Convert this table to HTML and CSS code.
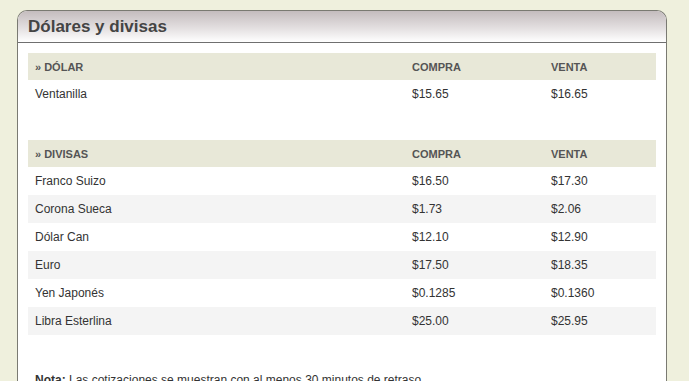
FILE: index.html
```html
<!DOCTYPE html>
<html lang="es">
<head>
<meta charset="utf-8">
<title>Dólares y divisas</title>
<link rel="stylesheet" href="styles.css">
</head>
<body>
<div class="panel">
  <div class="panel-head"><h2 class="title">Dólares y divisas</h2></div>
  <div class="panel-body">
    <table class="rates">
      <thead>
        <tr><th class="c-name">» DÓLAR</th><th class="c-buy">COMPRA</th><th class="c-sell">VENTA</th></tr>
      </thead>
      <tbody>
        <tr><td>Ventanilla</td><td>$15.65</td><td>$16.65</td></tr>
      </tbody>
    </table>
    <table class="rates gap">
      <thead>
        <tr><th class="c-name">» DIVISAS</th><th class="c-buy">COMPRA</th><th class="c-sell">VENTA</th></tr>
      </thead>
      <tbody>
        <tr><td>Franco Suizo</td><td>$16.50</td><td>$17.30</td></tr>
        <tr class="alt"><td>Corona Sueca</td><td>$1.73</td><td>$2.06</td></tr>
        <tr><td>Dólar Can</td><td>$12.10</td><td>$12.90</td></tr>
        <tr class="alt"><td>Euro</td><td>$17.50</td><td>$18.35</td></tr>
        <tr><td>Yen Japonés</td><td>$0.1285</td><td>$0.1360</td></tr>
        <tr class="alt"><td>Libra Esterlina</td><td>$25.00</td><td>$25.95</td></tr>
      </tbody>
    </table>
    <p class="note"><b>Nota:</b> Las cotizaciones se muestran con al menos 30 minutos de retraso.</p>
  </div>
</div>
</body>
</html>
```
FILE: styles.css
```css
html, body {
  margin: 0;
  padding: 0;
  background: #eff0dd;
  font-family: "Liberation Sans", Arial, sans-serif;
  color: #333;
}
body {
  padding-top: 10px;
}
.panel {
  margin-left: 17px;
  width: 648px;
  background: #fff;
  border: 1px solid #7a7a72;
  border-bottom: none;
  border-radius: 10px 10px 0 0;
  min-height: 400px;
}
.panel-head {
  height: 31px;
  border-bottom: 1px solid #6f6f6f;
  border-radius: 9px 9px 0 0;
  background: linear-gradient(to bottom, #c4bcbe 0%, #e3dfe0 55%, #ffffff 100%);
  display: flex;
  align-items: center;
  padding-left: 10px;
}
.title {
  margin: 0;
  font-size: 17px;
  font-weight: bold;
  color: #444;
  padding-top: 1px;
}
.panel-body {
  padding: 10px 10px 0 10px;
}
.rates {
  width: 628px;
  border-collapse: collapse;
  table-layout: fixed;
  font-size: 12px;
}
.rates.gap {
  margin-top: 32px;
}
.rates th {
  background: #e8e8d8;
  height: 27px;
  padding: 0 0 0 7px;
  text-align: left;
  font-size: 11px;
  font-weight: bold;
  color: #555;
}
.c-name { width: 370px; }
.c-buy { width: 132px; }
.rates td {
  height: 28px;
  padding: 0 0 0 7px;
  color: #333;
}
.rates tr.alt td {
  background: #f4f4f4;
}
.note {
  margin: 38px 0 0 7px;
  font-size: 12px;
  color: #333;
}
```
